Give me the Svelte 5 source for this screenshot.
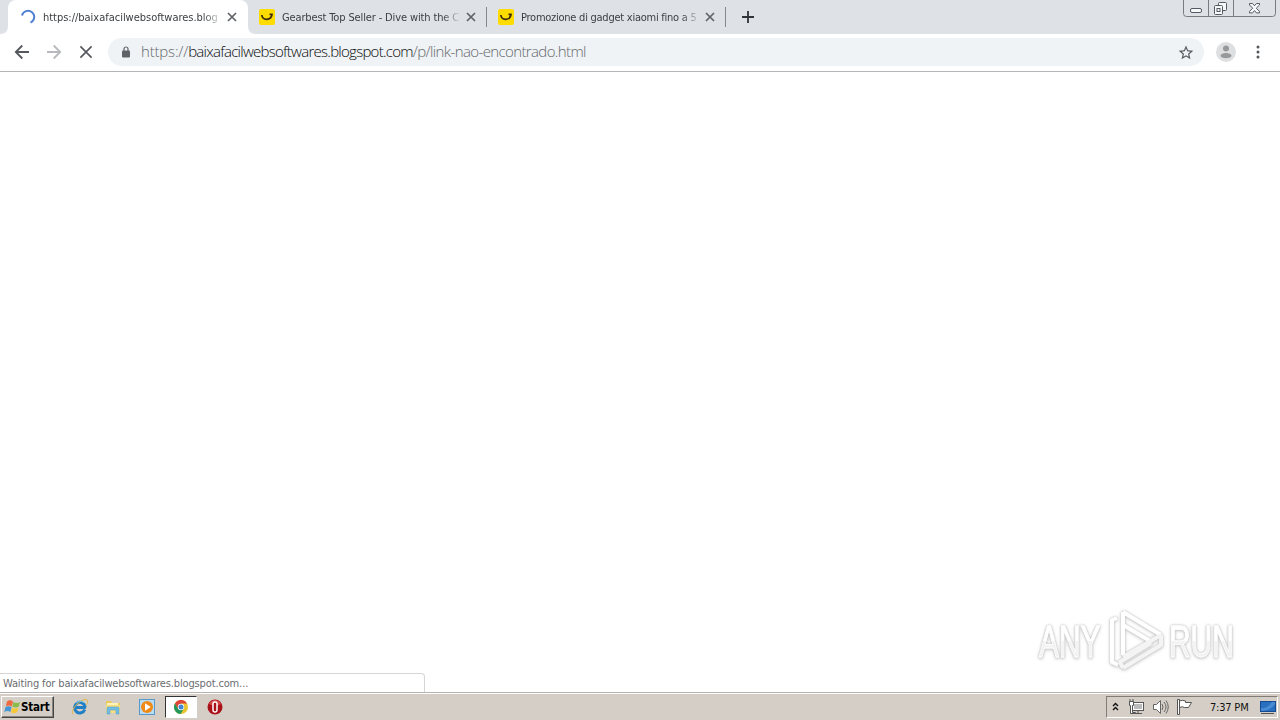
<script>
  const tabs = [
    { title: 'Gearbest Top Seller - Dive with the C', spacing: '-0.13px' },
    { title: 'Promozione di gadget xiaomi fino a 5', spacing: '-0.25px' }
  ];
</script>

{#snippet cross(size, width)}
  <svg width={size} height={size} viewBox="0 0 10 10" stroke="currentColor" stroke-width={width} fill="none"><path d="M1 1 9 9M9 1 1 9" /></svg>
{/snippet}

<div class="screen">
  <header class="strip">
    <div class="tab active">
      <svg class="spinner" width="16" height="16" viewBox="0 0 16 16" fill="none" stroke="#5080d0" stroke-width="2"><path d="M2 6.500A6.200 6.200 0 1 1 10.500 13.700" /></svg>
      <span class="title first">https://baixafacilwebsoftwares.blog</span>
      <span class="close">{@render cross(10, 1.7)}</span>
      <svg class="foot left" width="8" height="8"><path d="M8 0V8H0Q8 8 8 0" fill="#fff" /></svg>
      <svg class="foot right" width="8" height="8"><path d="M0 0V8H8Q0 8 0 0" fill="#fff" /></svg>
    </div>
    {#each tabs as tab}
      <div class="tab">
        <svg class="favicon" width="16" height="16" viewBox="0 0 16 16"><rect width="16" height="16" rx="2" fill="#ffdc00" /><path d="M2.800 6C3.500 11.800 12 11.800 13 5.500M10.500 5.300h3.300" fill="none" stroke="#3b2b09" stroke-width="1.700" /></svg>
        <span class="title" style:letter-spacing={tab.spacing}>{tab.title}</span>
        <span class="close">{@render cross(10, 1.7)}</span>
      </div>
    {/each}
    <svg class="plus" width="12" height="12" viewBox="0 0 12 12" stroke="#30343a" stroke-width="1.800"><path d="M6 0V12M0 6H12" /></svg>
    <svg class="controls" width="94" height="18" viewBox="0 0 94 18" fill="none" stroke="#777b82">
      <path d="M.500 0V13.500Q.500 16.500 3.500 16.500H89.500Q92.500 16.500 92.500 13.500V0M25.500 0V16M50.500 0V16" />
      <g stroke="#555a62" fill="#f7f8fa">
        <rect x="7.500" y="8.500" width="11" height="4" rx="1.500" />
        <rect x="35.500" y="2.500" width="8" height="8" rx="1" />
        <rect x="31.500" y="5.500" width="8" height="9" rx="1" />
        <rect x="34" y="8.500" width="3" height="3" />
        <path d="M66.500 3.500h3l2 2.300 2-2.300h3v1.500l-3.200 3.200 3.200 3.200v1.500h-3l-2-2.300-2 2.300h-3v-1.500l3.200-3.200-3.200-3.200z" />
      </g>
    </svg>
  </header>

  <nav class="toolbar">
    <svg class="nav" width="16" height="16" viewBox="0 0 16 16" fill="none" stroke="#55585d" stroke-width="1.800"><path d="M15 8H2M8.300 1.500 1.800 8l6.500 6.500" /></svg>
    <svg class="nav" width="16" height="16" viewBox="0 0 16 16" fill="none" stroke="#b7b9bc" stroke-width="1.800"><path d="M1 8H14M7.700 1.500 14.200 8l-6.500 6.500" /></svg>
    <span class="stop">{@render cross(14, 1.2)}</span>
    <div class="omnibox">
      <svg class="lock" width="8" height="12" viewBox="0 0 8 12"><path d="M2 5V3a2 2 0 0 1 4 0v2" fill="none" stroke="#5f6368" stroke-width="1.200" /><rect y="4.500" width="8" height="7" rx="1" fill="#5f6368" /></svg>
      <div class="url"><span class="scheme">https://</span><span class="host">baixafacilwebsoftwares.blogspot.com</span><span class="path">/p/link-nao-encontrado.html</span></div>
      <svg class="star" width="16" height="16" viewBox="1 0 22 22" fill="#55595e"><path d="m22 9.240-7.190-.620L12 2 9.190 8.630 2 9.240l5.460 4.730L5.820 21 12 17.270 18.180 21l-1.630-7.030zM12 15.400l-3.760 2.270 1-4.280-3.320-2.880 4.380-.380L12 6.100l1.710 4.040 4.380.380-3.320 2.880 1 4.280z" /></svg>
    </div>
    <svg class="avatar" width="20" height="20" viewBox="0 0 20 20"><circle cx="10" cy="10" r="10" fill="#dedfe0" /><circle cx="10" cy="6.500" r="3" fill="#96999c" /><path d="M4.500 14c0-4 11-4 11 0-1.500 3-9.500 3-11 0" fill="#96999c" /></svg>
    <svg class="menu" width="4" height="14" viewBox="0 0 4 14" fill="#55585d"><circle cx="2" cy="2" r="1.500" /><circle cx="2" cy="7" r="1.500" /><circle cx="2" cy="12" r="1.500" /></svg>
  </nav>

  <main>
    <div class="watermark">
      <span>ANY</span>
      <svg width="58" height="64" viewBox="0 0 58 64" fill="none" stroke="#fff" stroke-width="4" stroke-linejoin="round"><path d="M16 4V47M16 4 54 27M16 17l29 17M10 10 5 12V54l6 3" /><path d="M54 27 16 49M16 60 54 37V27M16 60l-3-6 31-19" stroke="#f4f4f4" /></svg>
      <span class="run">RUN</span>
    </div>
    <div class="status">Waiting for baixafacilwebsoftwares.blogspot.com...</div>
  </main>

  <footer class="taskbar">
    <button class="start">
      <svg width="17" height="16" viewBox="0 0 17 16"><path d="M3 2.500Q6 0 9 2.500L7.800 7.500Q5 5.500 1.800 7.500z" fill="#ee6940" /><path d="M9.500 3Q12.500 5 16 3L14.800 7.600Q12 9.300 8.300 7.600z" fill="#8abc4a" /><path d="M1.500 8Q5 6.200 7.500 8.200L6.300 13Q3.500 11 .300 13z" fill="#4496d4" /><path d="M8.100 8.500Q11.500 10.500 14.500 8.500L13.300 13Q10 15.500 6.800 13.200z" fill="#f8c83b" /></svg>
      <span>Start</span>
    </button>
    <div class="slot ie">
      <svg width="18" height="18" viewBox="0 0 18 18" fill="none"><path d="M13.800 11.500A5.300 5.300 0 1 1 14 8.500L13.500 9.500H5" stroke="#217fc5" stroke-width="3" /><path d="M2 16.500C-1 14 6 3 14 1.500c4-.500 2.500 4 1 5.500" stroke="#e0b744" /><path d="M5 5Q9 1.500 12.500 4.500" stroke="#72c8f4" /></svg>
    </div>
    <div class="slot folder">
      <svg width="16" height="16" viewBox="0 0 16 16"><path d="M1 2h5l1 2h8v10H1z" fill="#e9c95e" /><path d="M2 4h11v7H2z" fill="#fff3b5" /><path d="M1 6h14v8H1z" fill="#f4dd83" /><path d="M2 15V9q0-1 1-1h10q1 0 1 1v6h-3v-4H5v4z" fill="#72bde2" stroke="#499fc8" stroke-width=".500" /></svg>
    </div>
    <div class="slot">
      <svg width="16" height="16" viewBox="0 0 16 16"><rect x=".500" y=".500" width="15" height="15" fill="#b9dcf5" stroke="#5797ca" /><circle cx="8" cy="8" r="6" fill="#f08a16" /><path d="M6 4.300 11.800 8 6 11.700z" fill="#fff" /></svg>
    </div>
    <div class="slot pressed">
      <svg width="14" height="14" viewBox="0 0 14 14"><circle cx="7" cy="7" r="7" fill="#eac42f" /><path d="M.900 3.500A7 7 0 0 1 13.100 3.500H7L4 8.500z" fill="#db4437" /><path d="M.900 3.500A7 7 0 0 0 6.500 14L9.800 9 7 10 4.200 9z" fill="#24965a" /><circle cx="7" cy="7" r="3.200" fill="#fff" /><circle cx="7" cy="7" r="2.500" fill="#4285d4" /></svg>
    </div>
    <div class="slot">
      <svg width="16" height="16" viewBox="0 0 16 16"><circle cx="8" cy="8" r="7.500" fill="#a91218" /><path d="M2 5q6-8 12 0Q8 8 2 5" fill="#d94a4b" /><rect x="6" y="3" width="4" height="10" rx="1.700" fill="#a91218" stroke="#fff" stroke-width="1.500" /></svg>
    </div>
    <div class="tray">
      <svg class="chev" width="7" height="10" viewBox="0 0 7 10" fill="none" stroke="#111" stroke-width="1.400"><path d="M1 4 3.500 1.500 6 4M1 8 3.500 5.500 6 8" /></svg>
      <svg class="net" width="16" height="16" viewBox="0 0 16 16"><rect x="4.500" y="3.500" width="11" height="8" fill="#bbb" stroke="#555" /><rect x="5.500" y="4.500" width="9" height="6" fill="none" stroke="#fff" /><path d="M6 14.500h8M10 12v2" stroke="#555" /><path d="M1.500 2.500h4v4h-1v7h3v1H2.500v-8h-1zM2 0v3M5 0v3" fill="#fff" stroke="#555" /></svg>
      <svg class="sound" width="17" height="16" viewBox="0 0 17 16" fill="none" stroke="#666"><path d="M1.500 5.500h3l4-4v13l-4-4h-3z" fill="#fff" /><path d="M10 5q2 3 0 6M12 3q4 5 0 10M14 1.500q4.500 6.500 0 13" /></svg>
      <svg class="flag" width="16" height="16" viewBox="0 0 16 16" stroke="#555" fill="#fff"><path d="M1.500.500h2v15h-2zM3.500 2q3-1.500 6 0v1.500h6l-3 5h-4Q6.500 7 3.500 8.500z" /></svg>
      <time>7:37 PM</time>
      <svg class="desk" width="16" height="13" viewBox="0 0 16 13"><rect x=".500" y=".500" width="15" height="10" fill="#286fc0" stroke="#164a93" /><path d="M1 7Q7 8 12 1h3v2Q10 10 1 10z" fill="#4a8bd2" /><path d="M1 12.500h13" stroke="#555" /></svg>
    </div>
  </footer>
</div>

<style>
  :global(body) { margin: 0; overflow: hidden; }
  .screen { width: 1280px; height: 720px; display: flex; flex-direction: column; background: #fff; font: 11px/16px "DejaVu Sans Condensed", "DejaVu Sans", sans-serif; font-stretch: condensed; color: #3c4043; }
  svg { display: block; flex: none; }
  .strip { height: 34px; display: flex; align-items: center; background: #dee1e6; padding-left: 8px; box-sizing: border-box; flex: none; }
  .tab { width: 239px; height: 20px; display: flex; align-items: center; box-sizing: border-box; padding: 0 10px 0 11px; border-right: 1px solid #85888e; flex: none; }
  .tab.active { position: relative; width: 240px; height: 34px; padding: 0 11px 0 12px; border: 0; border-radius: 8px 8px 0 0; background: #fff; }
  .foot { position: absolute; bottom: 0; }
  .left { left: -8px; }
  .right { right: -8px; }
  .title { width: 178px; margin-left: 7px; padding-top: 1px; overflow: hidden; white-space: nowrap; mask-image: linear-gradient(90deg, #000 160px, transparent 180px); }
  .first { letter-spacing: -.020px; }
  .close { color: #5f6368; margin-left: auto; }
  .plus { margin-left: 16px; }
  .controls { margin: 0 3px 0 auto; align-self: flex-start; }
  .toolbar { height: 36px; display: flex; align-items: center; padding: 0 20px 1px 14px; border-bottom: 1px solid #b4b5b6; flex: none; }
  .nav { margin-right: 16px; }
  .stop { color: #55585d; margin: 0 15px 0 1px; }
  .omnibox { width: 1096px; height: 28px; display: flex; align-items: center; background: #f0f3f5; border-radius: 14px; box-sizing: border-box; padding: 0 10px 0 14px; flex: none; }
  .url { margin-left: 11px; padding-bottom: 2px; font: 300 15px/24px "Open Sans", "Noto Sans", sans-serif; white-space: nowrap; display: flex; }
  .scheme { letter-spacing: -.180px; }
  .scheme, .path { color: #65696e; }
  .host { color: #090b0d; letter-spacing: -.730px; }
  .path { letter-spacing: -.620px; }
  .star { margin-left: auto; }
  .avatar { margin-left: 12px; }
  .menu { margin-left: auto; }
  main { flex: 1; min-height: 0; display: flex; flex-direction: column; justify-content: flex-end; }
  .watermark { align-self: flex-end; display: flex; align-items: center; width: 195px; height: 64px; margin: 0 46px 1px 0; filter: drop-shadow(0 0 1px #c2c2c2) drop-shadow(0 1px 1.500px #d4d4d4); }
  .watermark span { padding-top: 2px; font: 44px/61px "Liberation Sans", Arial, sans-serif; -webkit-text-stroke: .800px #fff; color: transparent; background: linear-gradient(#fff 51%, #f2f2f2 51%); background-clip: text; width: 94px; margin-right: -26px; transform: scaleX(.680); transform-origin: left; white-space: nowrap; flex: none; }
  .watermark .run { margin-left: 4px; }
  .status { width: 425px; height: 19px; box-sizing: border-box; border: solid #d5d5d5; border-width: 1px 1px 0 0; border-radius: 0 4px 0 0; padding-left: 3px; line-height: 19px; letter-spacing: -.140px; color: #6b6d70; white-space: nowrap; }
  .taskbar { height: 28px; display: flex; align-items: center; background: #d5cec6; border-top: 1px solid #b7b3ae; box-shadow: inset 0 1px #fff; box-sizing: border-box; padding: 1px 2px 0 1px; flex: none; }
  .start { width: 53px; height: 22px; box-sizing: border-box; display: flex; align-items: center; gap: 0; padding: 0 1px 0 2px; border: 1px solid; border-color: #fff #444 #444 #fff; box-shadow: inset -1px -1px #89847c; background: #d5cec6; font: bold 11.500px/16px "DejaVu Sans Condensed", "DejaVu Sans", sans-serif; letter-spacing: -.200px; color: #000; }
  .slot { width: 34px; height: 22px; display: flex; align-items: center; justify-content: center; box-sizing: border-box; flex: none; }
  .ie { margin-left: 9px; }
  .folder { margin-left: -1px; }
  .pressed { width: 32px; margin: 0 1px; border: 1px solid; border-color: #333 #fff #fff #333; background: #fff; }
  .tray { width: 172px; height: 22px; margin-left: auto; border: 1px solid; border-color: #817c75 #fff #fff #817c75; box-sizing: border-box; display: flex; align-items: center; color: #111; }
  .chev { margin-left: 5px; }
  .net { margin-left: 9px; }
  .sound { margin-left: 8px; }
  .flag { margin-left: 7px; }
  time { margin-left: 18px; padding-top: 1px; white-space: nowrap; letter-spacing: -.200px; }
  .desk { margin-left: auto; margin-right: 1px; }
</style>
